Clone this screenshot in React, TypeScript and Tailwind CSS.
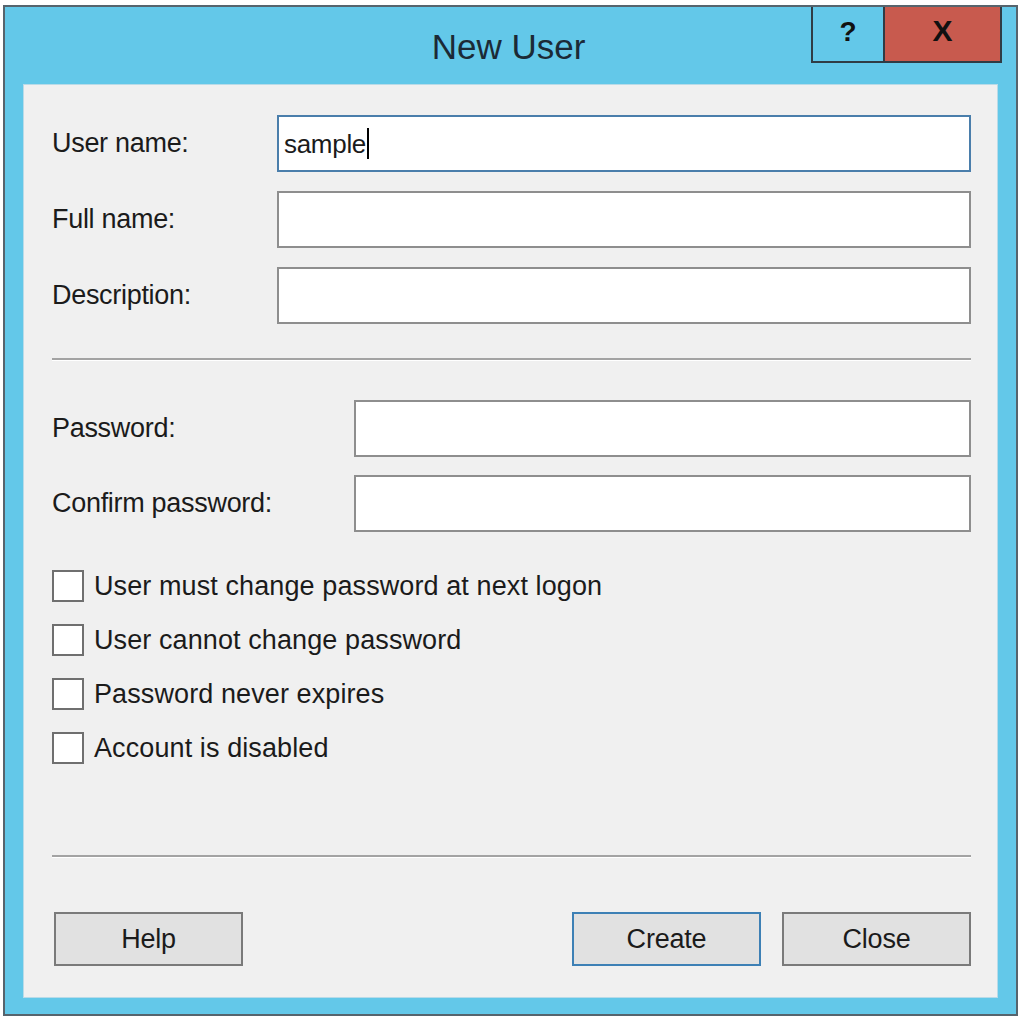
import React from "react";

const font = { fontFamily: '"Liberation Sans", Arial, sans-serif' };

function Field({ label, value, focused, labelW }: { label: string; value?: string; focused?: boolean; labelW: string }) {
  return (
    <div className="flex items-center h-[57px]">
      <div className={`${labelW} shrink-0 text-[27px] tracking-[-0.3px] text-[#1b1b1b] leading-none`}>{label}</div>
      <div
        className={`flex-1 h-[57px] bg-white flex items-center pl-[5px] border-2 ${
          focused ? "border-[#4a7eab]" : "border-[#8e8e8e]"
        }`}
      >
        {value !== undefined && (
          <span className="text-[26px] tracking-[-0.3px] text-[#1b1b1b] leading-none flex items-center">
            {value}
            <span className="inline-block w-[2px] h-[31px] bg-black ml-[1px]" />
          </span>
        )}
      </div>
    </div>
  );
}

function Check({ label }: { label: string }) {
  return (
    <div className="flex items-center h-[32px] gap-[10px]">
      <div className="w-[32px] h-[32px] bg-white border-2 border-[#6f6f6f] shrink-0" />
      <div className="text-[27px] tracking-[0.1px] text-[#1b1b1b] leading-none">{label}</div>
    </div>
  );
}

function Btn({ label, primary }: { label: string; primary?: boolean }) {
  return (
    <div
      className={`w-[189px] h-[54px] bg-[#e1e1e1] border-2 flex items-center justify-center text-[27px] tracking-[-0.2px] text-[#1b1b1b] leading-none ${
        primary ? "border-[#3d80b5]" : "border-[#7a7a7a]"
      }`}
    >
      {label}
    </div>
  );
}

function Sep() {
  return <div className="h-[3px] border-t-2 border-[#a3a3a3] border-b border-b-white" />;
}

export default function App() {
  return (
    <div className="w-[1024px] h-[1024px] bg-white pt-[5px] pl-[3px]" style={font}>
      <div className="w-[1015px] h-[1011px] border-2 border-[#56646d] bg-[#63c8e9] flex flex-col">
        <div className="relative h-[77px] shrink-0 flex items-center justify-center">
          <div className="text-[35px] text-[#1b2a36] leading-none mt-[1px] ml-[-4px]">New User</div>
          <div className="absolute right-[14px] top-0 flex">
            <div className="w-[72px] h-[56px] border-l-2 border-b-2 border-[#2f3c45] flex items-center justify-center text-[28px] font-bold text-[#111] leading-none pb-[4px]">
              ?
            </div>
            <div className="w-[119px] h-[56px] bg-[#c85a4e] border-l-2 border-r-2 border-b-2 border-[#2f3c45] flex items-center justify-center text-[30px] font-bold text-[#111] leading-none pb-[6px]">
              X
            </div>
          </div>
        </div>
        <div className="flex-1 mx-[18px] mb-[16px] bg-[#f0f0f0] border border-[#b9dbe8] pl-[28px] pr-[26px] pt-[30px] flex flex-col">
          <div className="flex flex-col gap-[19px]">
            <Field label="User name:" value="sample" focused labelW="w-[225px]" />
            <Field label="Full name:" labelW="w-[225px]" />
            <Field label="Description:" labelW="w-[225px]" />
          </div>
          <div className="mt-[34px]">
            <Sep />
          </div>
          <div className="flex flex-col gap-[18px] mt-[39px]">
            <Field label="Password:" labelW="w-[302px]" />
            <Field label="Confirm password:" labelW="w-[302px]" />
          </div>
          <div className="flex flex-col gap-[22px] mt-[38px]">
            <Check label="User must change password at next logon" />
            <Check label="User cannot change password" />
            <Check label="Password never expires" />
            <Check label="Account is disabled" />
          </div>
          <div className="mt-[91px]">
            <Sep />
          </div>
          <div className="flex items-center mt-[54px] pl-[2px]">
            <Btn label="Help" />
            <div className="flex-1" />
            <Btn label="Create" primary />
            <div className="w-[21px]" />
            <Btn label="Close" />
          </div>
        </div>
      </div>
    </div>
  );
}
